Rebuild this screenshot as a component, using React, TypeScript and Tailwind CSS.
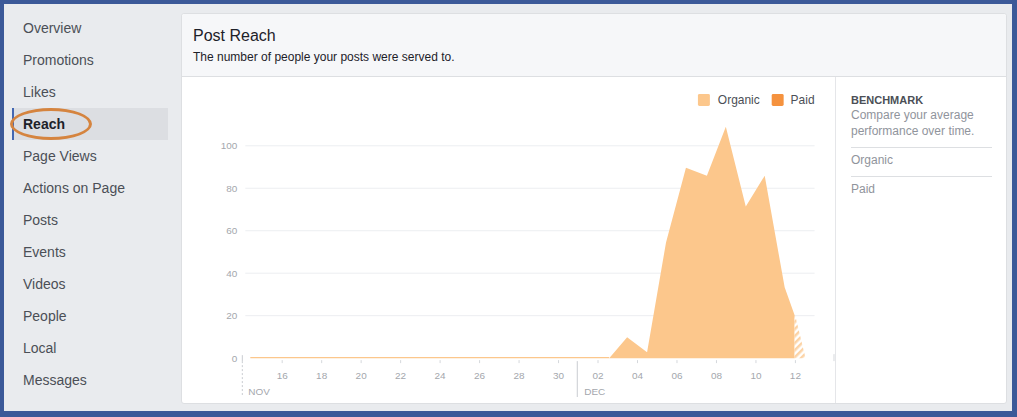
import React from "react";

const navItems = [
  "Overview",
  "Promotions",
  "Likes",
  "Reach",
  "Page Views",
  "Actions on Page",
  "Posts",
  "Events",
  "Videos",
  "People",
  "Local",
  "Messages",
];

// chart uses page coordinates through the viewBox offset
const yTicks = [0, 20, 40, 60, 80, 100];
const yFor = (v: number) => 359 - v * 2.13;
const xLabels = ["16", "18", "20", "22", "24", "26", "28", "30", "02", "04", "06", "08", "10", "12"];
const xFor = (i: number) => 282 + i * 39.6;

const organic: [number, number][] = [
  [610, 359],
  [628, 338],
  [648, 353],
  [667, 243],
  [687, 168],
  [708, 176],
  [727, 127],
  [747, 207],
  [766, 176],
  [786, 288],
  [796, 316],
  [796, 359],
];

function ReachChart() {
  return (
    <svg className="absolute inset-0 h-full w-full" viewBox="182 77 654 327">
      <defs>
        <pattern id="hatch" width="5" height="5" patternUnits="userSpaceOnUse" patternTransform="rotate(45)">
          <rect width="5" height="5" fill="#ffffff" />
          <rect width="2.5" height="5" fill="#fcd3a6" />
        </pattern>
      </defs>

      {yTicks.map((v) => (
        <g key={v}>
          {v > 0 ? <line x1={245} x2={816} y1={yFor(v)} y2={yFor(v)} stroke="#eceef1" strokeWidth={1} /> : null}
          <text x={237} y={yFor(v) + 3.5} textAnchor="end" fontSize={10} fill="#a4a7ad">
            {v}
          </text>
        </g>
      ))}

      <line x1={242} x2={242} y1={356} y2={362} stroke="#c9ccd1" strokeWidth={1} />
      <line x1={250} x2={610} y1={358.5} y2={358.5} stroke="#fcc78c" strokeWidth={1.2} />

      <polygon points={organic.map((p) => p.join(",")).join(" ")} fill="#fcc78c" />
      <polygon points="796,316 797,318 807,359 796,359" fill="url(#hatch)" />

      {xLabels.map((l, i) => (
        <g key={l + i}>
          <line x1={xFor(i)} x2={xFor(i)} y1={361} y2={364} stroke="#d5d8dc" strokeWidth={1} />
          <text x={xFor(i)} y={380} textAnchor="middle" fontSize={10} fill="#a4a7ad">
            {l}
          </text>
        </g>
      ))}

      <line x1={242} x2={242} y1={362} y2={398} stroke="#c9ccd1" strokeWidth={1} strokeDasharray="2 2" />
      <line x1={578} x2={578} y1={362} y2={398} stroke="#c9ccd1" strokeWidth={1} />
      <text x={248} y={396} fontSize={10} fill="#a4a7ad">
        NOV
      </text>
      <text x={585} y={396} fontSize={10} fill="#a4a7ad">
        DEC
      </text>
      <line x1={835.5} x2={835.5} y1={355} y2={362} stroke="#d5d8dc" strokeWidth={1} />

      <rect x={699} y={94} width={12} height={12} rx={1.5} fill="#fcc78c" />
      <text x={719} y={104.5} fontSize={12} fill="#4b4f56">
        Organic
      </text>
      <rect x={773} y={94} width={12} height={12} rx={1.5} fill="#f5923e" />
      <text x={792} y={104.5} fontSize={12} fill="#4b4f56">
        Paid
      </text>
    </svg>
  );
}

export default function App() {
  return (
    <div
      className="relative flex h-[417px] w-[1017px] bg-[#3b5998] pb-[6px] pl-[4px] pr-[5px] pt-[4px]"
      style={{ fontFamily: '"Liberation Sans", Arial, Helvetica, sans-serif' }}
    >
      <div className="flex flex-1 bg-[#e9ebee]">
        <nav className="w-[177px] shrink-0 pt-[8px]">
          {navItems.map((item) =>
            item === "Reach" ? (
              <div
                key={item}
                className="ml-[8px] flex h-[32px] w-[156px] items-center border-l-2 border-[#4267b2] bg-[#dcdee2] pl-[9px] text-[14px] font-bold text-[#1d2129]"
              >
                {item}
              </div>
            ) : (
              <div key={item} className="ml-[8px] flex h-[32px] w-[156px] items-center pl-[11px] text-[14px] text-[#4b4f56]">
                {item}
              </div>
            ),
          )}
        </nav>

        <div className="mb-[7px] mr-[5px] mt-[9px] flex flex-1 flex-col rounded-[3px] border border-[#dddfe2] bg-white">
          <div className="h-[63px] shrink-0 rounded-t-[3px] border-b border-[#dddfe2] bg-[#f6f7f9] pl-[11px] pt-[12px]">
            <div className="text-[16px] leading-[20px] text-[#1d2129]">Post Reach</div>
            <div className="mt-[3px] text-[12px] leading-[16px] text-[#1d2129]">The number of people your posts were served to.</div>
          </div>
          <div className="flex flex-1">
            <div className="relative flex-1">
              <ReachChart />
            </div>
            <div className="w-[171px] shrink-0 border-l border-[#e5e6e9] pl-[15px] pr-[14px] pt-[16px]">
              <div className="text-[11px] font-bold leading-[14px] text-[#4b4f56]">BENCHMARK</div>
              <div className="text-[12px] leading-[16px] text-[#90949c]">
                Compare your average
                <br />
                performance over time.
              </div>
              <div className="mt-[8px] border-t border-[#dddfe2] pb-[8px] pt-[4px] text-[12px] leading-[16px] text-[#90949c]">Organic</div>
              <div className="border-t border-[#dddfe2] pt-[4px] text-[12px] leading-[16px] text-[#90949c]">Paid</div>
            </div>
          </div>
        </div>
      </div>

      <div className="absolute left-[10px] top-[108px] h-[32px] w-[82px] rounded-[50%] border-[3px] border-[#d5843f]" />
    </div>
  );
}
